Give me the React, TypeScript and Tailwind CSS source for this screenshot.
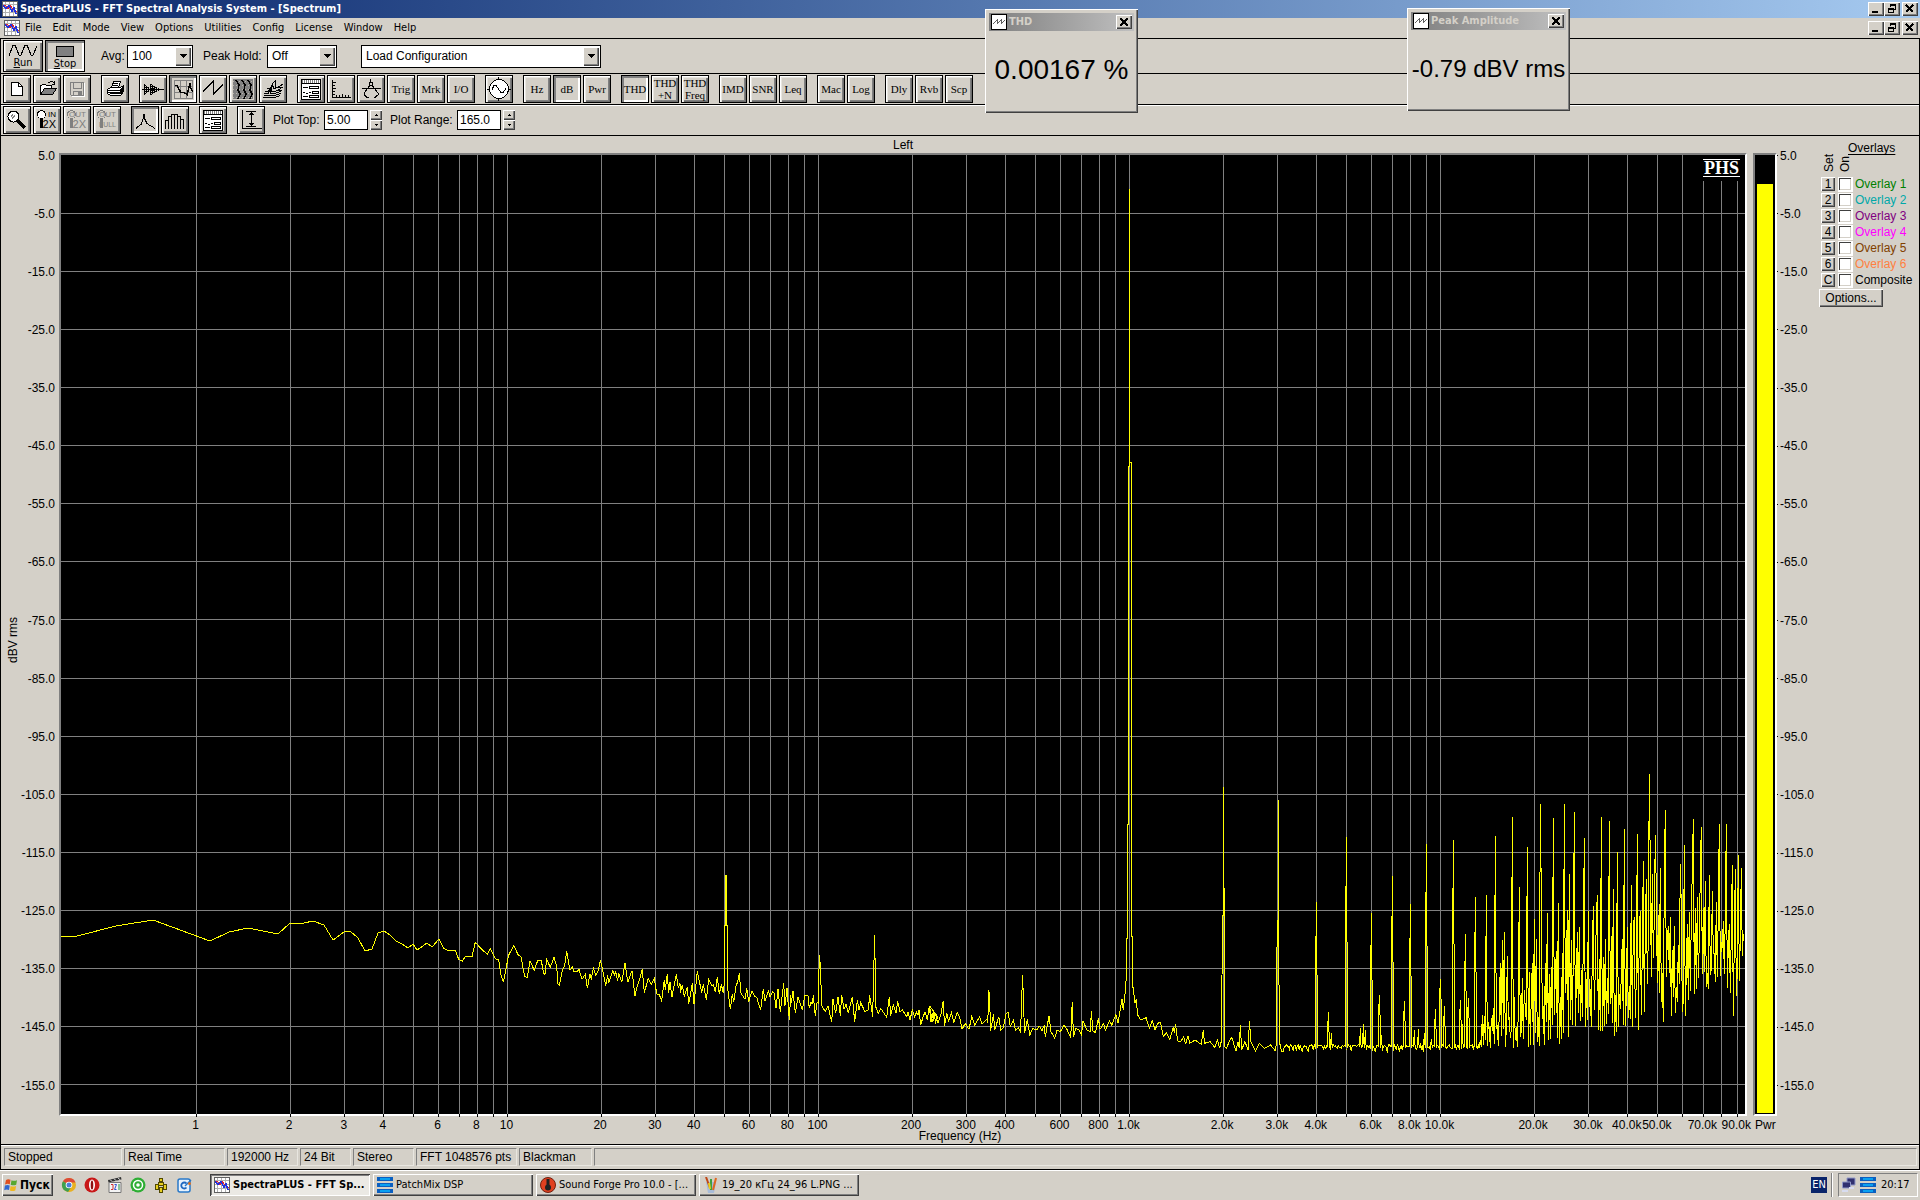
import { ReactNode } from "react";
import clsx from "clsx";

const FACE = "bg-[#d4d0c8]";
const RAISED = "shadow-[inset_1px_1px_0_#fff,inset_2px_2px_0_#e8e6e0,inset_-1px_-1px_0_#6e6e6e,inset_-2px_-2px_0_#808080]";
const SUNKEN = "shadow-[inset_2px_2px_0_#808080,inset_-2px_-2px_0_#fff]";
const THIN = "shadow-[inset_1px_1px_0_#fff,inset_-1px_-1px_0_#404040,inset_-2px_-2px_0_#808080]";
const ARIAL = "font-['Liberation_Sans',Arial,sans-serif] text-xs";
const TAHOMA = "font-['Tahoma','DejaVu_Sans_Condensed','Noto_Sans',sans-serif] text-[11px]";

/* ---------- spectrum geometry ---------- */

const LEFT = 61;
const TOP = 155;
const WIDTH = 1684;
const HEIGHT = 959;
const freqX = (f: number) => 196.5 + 311 * Math.log10(f);
const dbRows = Array.from({ length: 17 }, (_, i) => 5 - i * 10);
const dbY = (db: number) => TOP + 0.5 + (5 - db) * 5.806;

const gridFreqs: number[] = [];
for (let decade = 1; decade <= 10000; decade *= 10)
{
    for (let n = 1; n < 10; n++) gridFreqs.push(n * decade);
}

const freqLabels: [number, string][] = [
    [1, "1"], [2, "2"], [3, "3"], [4, "4"], [6, "6"], [8, "8"],
    [10, "10"], [20, "20"], [30, "30"], [40, "40"], [60, "60"], [80, "80"],
    [100, "100"], [200, "200"], [300, "300"], [400, "400"], [600, "600"], [800, "800"],
    [1000, "1.0k"], [2000, "2.0k"], [3000, "3.0k"], [4000, "4.0k"], [6000, "6.0k"], [8000, "8.0k"],
    [10000, "10.0k"], [20000, "20.0k"], [30000, "30.0k"], [40000, "40.0k"], [50000, "50.0k"],
    [70000, "70.0k"], [90000, "90.0k"],
];

/* ---------- trace ---------- */

// below 8 Hz
const low = "61,936 77,936 116,926 153,920 210,941 229,932 248,928 278,934 290,923 304,923 313,921 324,925 333,940 344,932 350,931 358,938 365,951 372,949 378,933 384,931 390,935 396,941 402,944 408,948 413,944 417,950 423,946 427,943 432,947 439,939";

// 6 Hz to 230 Hz, thirds of a pixel from 440,860
const mid = "0,243 12,266 22,271 46,271 56,298 67,304 76,290 96,290 106,247 125,268 142,283 151,265 166,296 176,300 183,345 190,367 206,285 221,257 235,285 243,290 254,350 262,352 270,304 283,330 293,302 304,302 311,340 315,343 320,298 331,322 342,292 350,320 354,372 358,376 366,335 374,315 380,274 386,310 390,330 397,322 401,334 412,334 417,328 426,358 436,343 442,385 450,343 454,355 460,325 467,346 475,332 481,301 487,325 497,377 503,345 506,370 518,332 524,345 527,335 533,362 536,340 545,367 555,310 563,367 576,332 585,408 592,377 600,355 607,328 613,398 625,355 634,373 643,355 650,402 658,404 665,422 673,360 676,390 682,343 686,398 690,367 696,410 709,343 715,385 720,370 721,398 727,376 733,410 742,380 746,433 757,370 762,433 772,334 785,398 790,373 799,419 806,358 812,370 817,378 820,375 826,395 832,352 838,402 844,373 850,400 853,370 854,195 857,195 857,45 859,45 859,195 862,195 863,385 871,448 877,402 881,425 889,373 892,370 898,340 903,400 915,418 920,385 926,425 936,392 944,410 950,412 956,433 962,448 970,388 975,424 985,392 990,410 998,394 1003,400 1008,445 1014,388 1021,455 1031,370 1035,437 1041,385 1048,479 1052,405 1054,430 1059,394 1066,458 1074,412 1087,450 1094,407 1104,407 1108,445 1112,428 1117,430 1120,406 1126,467 1131,428 1135,430 1138,286 1141,313 1145,437 1156,455 1164,437 1175,487 1179,418 1187,460 1194,410 1201,467 1205,406 1212,448 1218,433 1225,460 1237,410 1244,485 1252,421 1257,450 1262,428 1275,455 1285,450 1289,406 1298,470 1301,335 1304,226 1307,440 1315,460 1322,445 1340,472 1348,410 1352,467 1360,435 1368,460 1373,424 1380,455 1387,450 1400,470 1404,456 1410,480 1417,450 1424,470 1430,456 1434,466 1437,450 1442,494 1448,475 1455,455 1462,480 1468,437 1473,487 1480,455 1487,487 1493,470";

// 230 Hz to 3 kHz, x in 1/2.45 and y in 1/3 of a pixel from 640,860
const high = "709,437 717,487 722,455 730,490 737,465 743,422 746,498 752,460 756,485 763,457 769,487 777,458 783,470 789,508 797,490 806,508 813,468 820,495 832,470 838,492 850,478 852,490 854,390 856,400 859,512 866,463 869,510 879,470 884,510 890,503 897,460 902,457 907,500 915,480 920,512 927,503 932,515 935,440 937,345 939,403 942,520 949,478 955,525 962,505 972,510 978,498 985,512 990,497 993,530 1002,468 1007,515 1016,535 1022,510 1030,515 1039,496 1047,510 1054,530 1056,515 1059,427 1062,530 1068,505 1076,510 1082,525 1085,482 1095,510 1103,515 1106,453 1109,512 1116,518 1123,475 1127,508 1136,490 1140,512 1150,482 1156,495 1166,463 1171,490 1175,460 1181,418 1184,450 1188,405 1191,360 1191,235 1194,235 1195,-108 1197,-108 1197,-1182 1199,-1182 1199,-2013 1200,-2013 1200,-1194 1203,-1194 1203,-129 1205,-129 1205,228 1207,228 1207,375 1213,430 1216,418 1219,465 1227,480 1240,473 1248,505 1255,482 1262,510 1268,490 1275,487 1282,530 1290,518 1298,538 1307,500 1309,520 1312,493 1317,543 1325,545 1332,530 1337,553 1342,527 1347,550 1360,540 1375,553 1380,511 1383,550 1397,545 1408,562 1415,540 1420,565 1425,540 1427,165 1429,165 1429,-219 1430,-219 1431,170 1432,560 1437,565 1445,540 1450,532 1460,573 1465,545 1468,565 1471,495 1474,570 1482,545 1490,570 1493,484 1497,545 1508,572 1517,550 1530,565 1545,555 1556,572 1560,550 1561,190 1563,180 1563,-180 1564,-180 1565,185 1566,550";

// harmonics above 3 kHz, thirds of a pixel from 1280,740
const peaks: [number, number][] = [
    [109, 486], [145, 815], [154, 880], [199, 291], [240, 865], [250, 852], [256, 870], [274, 518],
    [298, 765], [304, 885], [337, 408], [373, 783], [391, 492], [403, 870], [415, 868], [433, 880],
    [439, 312], [454, 898], [466, 807], [481, 717], [493, 798], [520, 300], [541, 780], [547, 852],
    [556, 582], [565, 774], [586, 471], [607, 825], [618, 465], [628, 867], [646, 288], [661, 670],
    [667, 600], [673, 576], [682, 648], [697, 231], [709, 860], [718, 441], [727, 715], [742, 321],
    [757, 670], [763, 537], [769, 597], [781, 192], [784, 462], [796, 670], [802, 519], [808, 702],
    [820, 234], [829, 632], [835, 489], [841, 770], [853, 192], [862, 510], [868, 402], [874, 600],
    [883, 216], [892, 576], [898, 561], [913, 294], [925, 513], [940, 498], [949, 543], [952, 465],
    [964, 231], [976, 597], [988, 243], [1000, 447], [1012, 336], [1027, 597], [1033, 267], [1042, 560],
    [1054, 435], [1063, 530], [1072, 282], [1081, 513], [1090, 363], [1099, 417], [1108, 102], [1111, 381],
    [1117, 402], [1126, 285], [1129, 447], [1141, 384], [1153, 411], [1156, 210], [1165, 558], [1171, 531],
    [1183, 558], [1195, 615], [1201, 372], [1204, 498], [1213, 315], [1222, 552], [1228, 516], [1237, 390],
    [1240, 237], [1246, 504], [1252, 471], [1261, 399], [1264, 261], [1276, 423], [1288, 405], [1297, 453],
    [1309, 486], [1318, 252], [1330, 543], [1339, 252], [1348, 552], [1357, 375], [1366, 387], [1375, 345],
    [1384, 384], [1390, 583],
];

const noiseTop: [number, number][] = [[600, 840], [650, 760], [750, 680], [850, 620], [1000, 580], [1100, 500], [1390, 500]];
const noiseBottom: [number, number][] = [
    [600, 925], [740, 922], [850, 912], [885, 870], [940, 880], [1000, 890], [1080, 870], [1100, 790], [1120, 690],
    [1150, 850], [1190, 840], [1217, 860], [1250, 760], [1270, 790], [1300, 760], [1325, 700], [1360, 830], [1390, 700],
];

function lerp(table: [number, number][], x: number)
{
    const i = Math.max(1, table.findIndex(([px]) => px >= x));
    const [x0, y0] = table[i - 1];
    const [x1, y1] = table[i];
    return y0 + ((y1 - y0) * (x - x0)) / (x1 - x0);
}

function place(points: string, x: number, y: number, sx: number, sy: number)
{
    return points.split(" ").map((p) => {
        const [px, py] = p.split(",").map(Number);
        return `${(x + px / sx).toFixed(1)},${(y + py / sy).toFixed(1)}`;
    }).join(" ");
}

function harmonics()
{
    let seed = 41;
    const rnd = () => (seed = (seed * 16807) % 2147483647) / 2147483647;
    const out: string[] = [];
    let down = false;
    for (let x = 1; x <= 1390; x += 3)
    {
        const peak = peaks.find(([px]) => Math.abs(px - x) <= 1);
        if (x < 600)
        {
            if (peak)
            {
                const half = peak[1] < 600 ? peak[1] + (922 - peak[1]) * 0.5 : peak[1] + 60;
                out.push(`${x - 2},920`, `${x - 2},${Math.min(915, half)}`, `${x},${peak[1]}`, `${x + 2},${Math.min(915, half)}`, `${x + 2},925`);
            }
            else
            {
                out.push(`${x},${914 + Math.round(rnd() * rnd() * 26)}`);
            }
            continue;
        }
        const bottom = lerp(noiseBottom, x);
        const top = lerp(noiseTop, x);
        if (peak)
        {
            out.push(`${x},${peak[1]}`);
            down = true;
        }
        else
        {
            // samples swing between the floor and the hash above it
            const y = down ? bottom - rnd() * rnd() * 0.6 * (bottom - top) : top + rnd() * 0.8 * (bottom - top);
            out.push(`${x},${y}`);
            down = !down;
        }
    }
    return out.join(" ");
}

const trace = [low, place(mid, 440, 860, 3, 3), place(high, 640, 860, 2.45, 3), place(harmonics(), 1280, 740, 3, 3)].join(" ");

/* ---------- icons ---------- */

function Glyph({ children }: { children: ReactNode })
{
    return (
        <svg viewBox="0 0 28 28" className="absolute -inset-px size-7" fill="none" stroke="#000" shapeRendering="crispEdges" aria-hidden="true">
            {children}
        </svg>
    );
}

const icons: Record<string, ReactNode> = {
    new: <Glyph><path d="M8.500 7.500h7l4 4v9h-11z" fill="#fff" /><path d="M15.500 7.500v4h4" /></Glyph>,
    open: (
        <Glyph>
            <path d="M7.500 19.500v-9h1l1-1h3l1 1h5v3" fill="#fff" />
            <path d="M7.500 19.500l4-6h12l-4 6z" fill="#808080" />
            <path d="M15 7.500h2M17 6.500h3M20 7.500h1M21.500 6v4M19 9.500h3" />
        </Glyph>
    ),
    save: (
        <Glyph>
            <path d="M7.500 7.500h13v13h-12l-1-1z" stroke="#808080" />
            <path d="M10.500 7.500v6h8v-6M10.500 20.500v-4h8v4" stroke="#808080" />
            <path d="M15 17h3v3h-3z" fill="#808080" stroke="none" />
            <path d="M21.500 8v13.500h-13" stroke="#fff" />
        </Glyph>
    ),
    print: (
        <Glyph>
            <path d="M10.500 12.500l2-6h7l-2 6z" fill="#fff" />
            <path d="M6.500 14.500l3-2h10l3-2v6l-3 4h-10l-3-2z" fill="#fff" />
            <path d="M12 8.500h5M12 10.500h5M7 15.500h12l3-3M7 17.500h12l3-3M9 18.500h10l3-3" />
        </Glyph>
    ),
    wave: (
        <Glyph>
            <path d="M3 14.500h22M5.500 9v11M7.500 11v7M9.500 12v5M11.500 9v11M13.500 10v9M15.500 11v7M17.500 12v5M19.500 13v3" />
            <path d="M6.500 10v9M12.500 9v11M14.500 11v7M8.500 12v5M16.500 12v5" strokeDasharray="1 1" />
        </Glyph>
    ),
    spectrum: (
        <Glyph>
            <path d="M5.500 5.500h18v18h-18zM11.500 5v19M17.500 5v19M5 11.500h19M5 17.500h19" stroke="#808080" />
            <path d="M6 10.500h2l2 4 2 3h3l3 2 1-4 1-3 1-4v4l3 4" strokeWidth="1.500" />
        </Glyph>
    ),
    zigzag: <Glyph><path d="M4 16.500l10-10v13l10-10" /></Glyph>,
    spectrogram: (
        <Glyph>
            <path d="M4 4h20v20h-20z" fill="#808080" stroke="none" />
            <path d="M4 6.500h20M4 10.500h20M4 14.500h20M4 18.500h20M4 22.500h20" stroke="#b8b4ac" strokeDasharray="1 2" />
            <path d="M7 5l3 5-1 5 2 4-2 5M13 5l3 5-1 5 2 4-2 5M19 5l3 5-1 5 2 4-2 5" strokeWidth="1.500" />
        </Glyph>
    ),
    surface: (
        <Glyph>
            <path d="M4 22.500h12l5-2M5 20.500h10l7-2M5 18.500h4l2-3v3h4l7-2M6 16.500h3l3-4v4h4l6-3M8 13.500h3l2-3M16 13v-7l-3 3 2 5 6-3 3-2M18 12.500h6M19 15.500h4" />
        </Glyph>
    ),
    properties: (
        <Glyph>
            <path d="M4.500 4.500h19v20h-19z" fill="#fff" />
            <path d="M5 6.500h18" stroke="#808080" strokeWidth="3" strokeDasharray="1 1" />
            <path d="M4 8.500h20M12.500 11.500h9v2h-9zM15.500 16.500h6v2h-6zM12.500 20.500h9v2h-9zM6 12.500h5M6 17.500h2M9 18.500h2M12 17.500h2M6 21.500h5" />
        </Glyph>
    ),
    scale: <Glyph><path d="M5.500 5v17.500h18M5 7.500h4M5 10.500h3M5 13.500h4M5 16.500h3M5 19.500h3M9.500 20v3M12.500 20v3M15.500 19v4M18.500 20v3M21.500 20v3" /></Glyph>,
    compass: <Glyph><path d="M13.500 4v3M12.500 7h3v3h-3zM5 13.500h19M13 10l-2 3-4 5v2l4 3M15 10l2 3 4 5v2l-4 3M10 22h2M17 22h2" /></Glyph>,
    generator: (
        <Glyph>
            <circle cx="14" cy="14" r="9.500" fill="#fff" />
            <path d="M13.500 2v3M13.500 23v3M2 14.500h3M23 14.500h3M7 14.500l2-4h2l5 7h2l3-4" />
        </Glyph>
    ),
    zoom: (
        <Glyph>
            <circle cx="10.500" cy="10.500" r="5.500" fill="#fff" />
            <path d="M8 10.500l2-2M9 12.500l3-3" stroke="#808080" />
            <path d="M15 15l7 7" strokeWidth="3" />
        </Glyph>
    ),
    peak: <Glyph><path d="M5 22.500l2-2 3-2 2-5 1-5 1 5 2 4 3 2 2 1 3 2" /></Glyph>,
    bars: <Glyph><path d="M4.500 23v-9h3v9M7.500 14v-4h3v13M10.500 10v-2h3v15M13.500 8h3v15M16.500 10h3v13M19.500 13h3v10" /></Glyph>,
    range: <Glyph><path d="M5.500 4v18.500h19M9 5.500h10M9 20.500h10M14.500 6v14M12 8.500h5M13 7.500h3M12 17.500h5M13 18.500h3" /></Glyph>,
};

function ZoomIcon({ top, bottom, off, small }: { top: string; bottom: string; off?: boolean; small?: boolean })
{
    return (
        <>
            <Glyph>
                <circle cx="8.500" cy="8.500" r="4" fill={off ? "none" : "#fff"} stroke={off ? "#808080" : "#000"} />
                <path d="M8.500 13v9" stroke={off ? "#808080" : "#000"} strokeWidth="3" />
            </Glyph>
            <span className={clsx("absolute right-1 top-1 font-['Liberation_Sans'] text-[8px] leading-2", off && "text-[#808080]")}>{top}</span>
            <span className={clsx("absolute bottom-1 right-1 font-['Liberation_Sans']", small ? "text-[7px] leading-2" : "text-[11px] leading-[9px]", off && "text-[#808080]")}>{bottom}</span>
        </>
    );
}

function AppIcon({ className }: { className?: string })
{
    return (
        <svg viewBox="0 0 16 16" className={clsx("size-4 shrink-0", className)} fill="none" shapeRendering="crispEdges" aria-hidden="true">
            <path d="M0 0h16v16h-16z" fill="#fff" />
            <path d="M3.500 0v16M7.500 0v16M11.500 0v16M0 3.500h16M0 7.500h16M0 11.500h16" stroke="#b0b0b0" />
            <path d="M.500.500h15v15h-15z" stroke="#606060" />
            <path d="M1 4l3 1 2 3 2-4 3 4 4 3" stroke="#e02030" />
            <path d="M1 5l3 2 3-2 3 5 2-3 2 6" stroke="#2030e0" strokeWidth="1.500" />
        </svg>
    );
}

/* ---------- controls ---------- */

function ToolButton({ label, icon, children, on, className }: { label: string; icon?: string; children?: ReactNode; on?: boolean; className?: string })
{
    return (
        <button type="button" aria-label={label} aria-pressed={on}
            className={clsx("relative flex size-7 shrink-0 items-center justify-center whitespace-nowrap border border-black font-['Liberation_Serif','Times_New_Roman',serif] text-[11px] leading-3", FACE, on ? SUNKEN : RAISED, className)}>
            {icon ? icons[icon] : children}
        </button>
    );
}

function Group({ children }: { children: ReactNode })
{
    return <div className="flex gap-[2px]">{children}</div>;
}

function Combo({ id, value, className }: { id: string; value: string; className: string })
{
    return (
        <div className={clsx("relative h-[23px]", className)}>
            <select id={id} aria-label={id} className={clsx("h-full w-full appearance-none border border-black bg-white pl-1", ARIAL)} defaultValue={value}>
                <option>{value}</option>
            </select>
            <span className={clsx("pointer-events-none absolute right-[2px] top-[2px] flex h-[19px] w-4 items-center justify-center", FACE, THIN)}>
                <svg viewBox="0 0 7 4" className="h-1 w-[7px]" shapeRendering="crispEdges"><path d="M0 0h7l-3.500 4z" /></svg>
            </span>
        </div>
    );
}

function Spinner({ name }: { name: string })
{
    return (
        <div className="ml-[2px] flex w-3 flex-col">
            <button type="button" aria-label={`${name} up`} className={clsx("flex h-[10px] items-center justify-center", FACE, THIN)}>
                <svg viewBox="0 0 3 2" className="h-[2px] w-[3px]" shapeRendering="crispEdges"><path d="M0 2h3l-1.500-2z" /></svg>
            </button>
            <button type="button" aria-label={`${name} down`} className={clsx("flex h-[10px] items-center justify-center", FACE, THIN)}>
                <svg viewBox="0 0 3 2" className="h-[2px] w-[3px]" shapeRendering="crispEdges"><path d="M0 0h3l-1.500 2z" /></svg>
            </button>
        </div>
    );
}

function CaptionButton({ kind }: { kind: "min" | "restore" | "close" })
{
    return (
        <button type="button" aria-label={kind} className={clsx("flex h-[14px] w-4 items-center justify-center", FACE, THIN, kind === "close" && "ml-[2px]")}>
            <svg viewBox="0 0 10 10" className="size-[10px]" fill="none" stroke="#000" shapeRendering="crispEdges">
                {kind === "min" && <path d="M1 8h6" strokeWidth="2" />}
                {kind === "restore" && <path d="M3.500 3v-2.500h5v5h-2M3 1.500h6M1.500 4.500h5v4h-5zM1 5.500h6" />}
                {kind === "close" && <path d="M1 1l7 7M8 1l-7 7" strokeWidth="1.500" />}
            </svg>
        </button>
    );
}

function CaptionButtons()
{
    return (
        <div className="ml-auto flex pr-[2px]">
            <CaptionButton kind="min" />
            <CaptionButton kind="restore" />
            <CaptionButton kind="close" />
        </div>
    );
}

function Readout({ title, value, className, size }: { title: string; value: string; className: string; size: string })
{
    return (
        <section className={clsx("absolute flex flex-col p-1", FACE, THIN, className)}>
            <header className={clsx("flex h-[18px] items-center bg-linear-to-r from-[#808080] to-[#c0c0c0] pl-[2px] pr-[2px] font-bold text-[#d4d0c8]", TAHOMA)}>
                <svg viewBox="0 0 16 16" className="size-4" fill="none" shapeRendering="crispEdges">
                    <path d="M.500.500h15v15h-15z" fill="#fff" stroke="#000" />
                    <path d="M2 10l4-4v4l4-4v4l4-4" stroke="#606060" />
                </svg>
                <h2 className="ml-[2px] whitespace-nowrap">{title}</h2>
                <button type="button" aria-label={`Close ${title}`} className={clsx("ml-auto flex h-[14px] w-4 items-center justify-center", FACE, THIN)}>
                    <svg viewBox="0 0 8 8" className="size-2" stroke="#000" strokeWidth="1.500" shapeRendering="crispEdges"><path d="M0 0l8 8M8 0l-8 8" /></svg>
                </button>
            </header>
            <p className={clsx("flex flex-1 items-center justify-center whitespace-nowrap font-['Liberation_Sans',Arial,sans-serif] leading-10", size)}>{value}</p>
        </section>
    );
}

/* ---------- page parts ---------- */

function Toolbars()
{
    return (
        <>
            <div className={clsx("flex h-[35px] items-center border-t border-black pl-[2px]", ARIAL)}>
                <button type="button" className={clsx("flex h-8 w-10 flex-col items-center justify-end border border-black pb-[2px] leading-3", RAISED, TAHOMA)}>
                    <svg viewBox="0 0 30 14" className="h-[14px] w-[30px]" fill="none" stroke="#000" shapeRendering="crispEdges">
                        <path d="M1 13l4-11h2l4 10h2l4-10h2l4 10h2l4-9" />
                    </svg>
                    <span className="leading-3"><u>R</u>un</span>
                </button>
                <button type="button" aria-pressed="true" className={clsx("ml-[2px] flex h-8 w-10 flex-col items-center justify-end border border-black pb-px", SUNKEN, TAHOMA)}>
                    <span className="mb-px h-[11px] w-[18px] border border-black bg-[#808080]" />
                    <span className="leading-3"><u>S</u>top</span>
                </button>
                <label htmlFor="Average" className="ml-4 w-[26px]">Avg:</label>
                <Combo id="Average" value="100" className="w-[66px]" />
                <label htmlFor="Peak hold" className="ml-[10px] w-16 whitespace-nowrap">Peak Hold:</label>
                <Combo id="Peak hold" value="Off" className="w-[70px]" />
                <Combo id="Configuration" value="Load Configuration" className="ml-6 w-60" />
            </div>
            <div className="flex h-[31px] gap-[10px] border-t border-black pl-[2px] pt-px">
                <Group>
                    <ToolButton label="New" icon="new" />
                    <ToolButton label="Open" icon="open" />
                    <ToolButton label="Save" icon="save" />
                </Group>
                <ToolButton label="Print" icon="print" />
                <Group>
                    <ToolButton label="Time series" icon="wave" />
                    <ToolButton label="Spectrum" icon="spectrum" on />
                    <ToolButton label="Phase" icon="zigzag" />
                    <ToolButton label="Spectrogram" icon="spectrogram" />
                    <ToolButton label="Surface" icon="surface" />
                </Group>
                <Group>
                    <ToolButton label="Processing settings" icon="properties" />
                    <ToolButton label="Scaling" icon="scale" />
                    <ToolButton label="Calibration" icon="compass" />
                    <ToolButton label="Trigger" className="text-xs">Trig</ToolButton>
                    <ToolButton label="Markers" className="text-xs">Mrk</ToolButton>
                    <ToolButton label="Input output" className="text-xs">I/O</ToolButton>
                </Group>
                <ToolButton label="Signal generator" icon="generator" />
                <Group>
                    <ToolButton label="Peak frequency" className="text-xs">Hz</ToolButton>
                    <ToolButton label="Peak amplitude" className="text-xs" on>dB</ToolButton>
                    <ToolButton label="Total power" className="text-xs">Pwr</ToolButton>
                </Group>
                <Group>
                    <ToolButton label="THD" on>THD</ToolButton>
                    <ToolButton label="THD plus noise"><span>THD<br />+N</span></ToolButton>
                    <ToolButton label="THD against frequency"><span>THD<br />Freq</span></ToolButton>
                </Group>
                <Group>
                    <ToolButton label="IMD">IMD</ToolButton>
                    <ToolButton label="SNR">SNR</ToolButton>
                    <ToolButton label="Leq" className="text-xs">Leq</ToolButton>
                </Group>
                <Group>
                    <ToolButton label="Macro" className="text-xs">Mac</ToolButton>
                    <ToolButton label="Logging" className="text-xs">Log</ToolButton>
                </Group>
                <Group>
                    <ToolButton label="Delay" className="text-xs">Dly</ToolButton>
                    <ToolButton label="Reverb" className="text-xs">Rvb</ToolButton>
                    <ToolButton label="Scope" className="text-xs">Scp</ToolButton>
                </Group>
            </div>
            <div className="h-px bg-black" />
            <div className={clsx("flex h-[30px] items-start border-t border-white pl-[2px]", ARIAL)}>
                <div className="flex gap-[10px]">
                    <Group>
                        <ToolButton label="Zoom" icon="zoom" />
                        <ToolButton label="Zoom in"><ZoomIcon top="IN" bottom="2X" /></ToolButton>
                        <ToolButton label="Zoom out"><ZoomIcon top="OUT" bottom="2X" off /></ToolButton>
                        <ToolButton label="Zoom out full"><ZoomIcon top="OUT" bottom="FULL" off small /></ToolButton>
                    </Group>
                    <Group>
                        <ToolButton label="Line plot" icon="peak" on />
                        <ToolButton label="Bar plot" icon="bars" />
                    </Group>
                    <ToolButton label="Plot options" icon="properties" />
                    <ToolButton label="Plot range" icon="range" />
                </div>
                <div className="flex h-7 items-center">
                    <label htmlFor="top" className="ml-2 w-[51px] whitespace-nowrap">Plot Top:</label>
                    <input id="top" defaultValue="5.00" className="h-5 w-11 border border-black bg-white px-[2px]" />
                    <Spinner name="Plot top" />
                    <label htmlFor="range" className="ml-2 w-[67px] whitespace-nowrap">Plot Range:</label>
                    <input id="range" defaultValue="165.0" className="h-5 w-11 border border-black bg-white px-[2px]" />
                    <Spinner name="Plot range" />
                </div>
            </div>
        </>
    );
}

function DbScale({ ticks, className }: { ticks?: boolean; className: string })
{
    return (
        <div className={clsx("flex flex-col pb-[2px] pt-[2px]", className)}>
            {dbRows.map((db, i) => (
                <div key={db} className={clsx("basis-0", i === 16 ? "grow" : "grow-2")}>
                    <div className="flex h-px items-center justify-end">
                        {ticks && <i className="h-px w-[3px] bg-black" />}
                        <span className={clsx(ticks && "ml-[2px] flex-1")}>{db.toFixed(1)}</span>
                    </div>
                </div>
            ))}
        </div>
    );
}

function Plot()
{
    return (
        <div className="relative min-w-0 flex-1 border-2 border-b-white border-l-[#808080] border-r-white border-t-[#808080] bg-black">
            <svg viewBox={`${LEFT} ${TOP} ${WIDTH} ${HEIGHT}`} preserveAspectRatio="none" className="absolute inset-0 h-full w-full" fill="none" shapeRendering="crispEdges">
                <g stroke="#808080">
                    {gridFreqs.map((f) => <path key={f} d={`M${Math.floor(freqX(f)) + 0.5} ${TOP}v${HEIGHT}`} vectorEffect="non-scaling-stroke" />)}
                    {dbRows.slice(1).map((db) => <path key={db} d={`M${LEFT} ${Math.floor(dbY(db)) + 0.5}h${WIDTH}`} vectorEffect="non-scaling-stroke" />)}
                </g>
                <polyline points={trace} stroke="#ff0" vectorEffect="non-scaling-stroke" />
            </svg>
            <div className="absolute right-0 top-0 bg-black px-[5px] py-1">
                <div className="border-y border-white px-px font-['Liberation_Serif',serif] text-lg font-bold leading-4 text-white">PHS</div>
            </div>
            {gridFreqs.map((f) => (
                <i key={f} className="absolute top-full h-[3px] w-px bg-black" style={{ left: `${((Math.floor(freqX(f)) - LEFT) / WIDTH) * 100}%` }} />
            ))}
            {freqLabels.map(([f, text]) => (
                <span key={f} className="absolute top-full mt-[3px] -translate-x-1/2 leading-4" style={{ left: `${((freqX(f) - 1 - LEFT) / WIDTH) * 100}%` }}>{text}</span>
            ))}
        </div>
    );
}

const overlays = [
    { key: "1", name: "Overlay 1", color: "text-[#008000]" },
    { key: "2", name: "Overlay 2", color: "text-[#00a8a8]" },
    { key: "3", name: "Overlay 3", color: "text-[#800080]" },
    { key: "4", name: "Overlay 4", color: "text-[#ff00ff]" },
    { key: "5", name: "Overlay 5", color: "text-[#804000]" },
    { key: "6", name: "Overlay 6", color: "text-[#ff8040]" },
    { key: "C", name: "Composite", color: "text-black" },
];

function Overlays()
{
    return (
        <aside className="w-[101px] shrink-0 pt-1">
            <h2 className="pl-[30px] leading-4 underline underline-offset-2">Overlays</h2>
            <div className="flex h-4 items-end gap-[2px] pl-1">
                <span className="rotate-180 leading-[14px] [writing-mode:vertical-rl]">Set</span>
                <span className="rotate-180 leading-[14px] [writing-mode:vertical-rl]">On</span>
            </div>
            <div className="pl-[3px] pt-1">
                {overlays.map((o) => (
                    <div key={o.key} className="flex h-4 items-center">
                        <button type="button" aria-label={`Set ${o.name}`} className={clsx("flex h-[14px] w-[14px] items-center justify-center leading-3", FACE, THIN)}>{o.key}</button>
                        <input id={`overlay-${o.key}`} type="checkbox" className="ml-[3px] h-[15px] w-[15px] appearance-none border border-b-2 border-r-2 border-white bg-white shadow-[inset_1px_1px_0_#404040,inset_-1px_-1px_0_#d4d0c8]" />
                        <label htmlFor={`overlay-${o.key}`} className={clsx("ml-[2px] whitespace-nowrap", o.color)}>{o.name}</label>
                    </div>
                ))}
            </div>
            <button type="button" className={clsx("ml-px mt-px flex h-[18px] w-16 items-center justify-center", FACE, THIN)}>Options...</button>
        </aside>
    );
}

function Cell({ className, children }: { className: string; children?: ReactNode })
{
    return (
        <div className={clsx("flex h-[18px] items-center whitespace-nowrap border border-b-[#e8e6e0] border-l-[#808080] border-r-[#e8e6e0] border-t-[#808080] pl-[3px]", className)}>{children}</div>
    );
}

function TaskButton({ icon, children, active }: { icon: ReactNode; children: ReactNode; active?: boolean })
{
    return (
        <button type="button" className={clsx("flex h-[22px] w-40 items-center gap-[3px] whitespace-nowrap pl-1", active ? "bg-[#ebe9e4] font-bold shadow-[inset_1px_1px_0_#404040,inset_-1px_-1px_0_#fff,inset_2px_2px_0_#808080]" : clsx(FACE, THIN))}>
            {icon}
            <span>{children}</span>
        </button>
    );
}

const mixerIcon = (
    <svg viewBox="0 0 16 16" className="size-4 shrink-0" shapeRendering="crispEdges">
        <path d="M0 0h16v4h-16zM0 6h16v4h-16zM0 12h16v4h-16z" fill="#0a5fc0" />
        <path d="M3 1h10v2h-10zM3 7h10v2h-10zM3 13h10v2h-10z" fill="#0aa0f0" />
    </svg>
);

function QuickLaunch()
{
    return (
        <div className="ml-2 flex gap-[7px]">
            <svg viewBox="0 0 16 16" className="size-4">
                <circle cx="8" cy="8" r="7" fill="#e8b020" />
                <path d="M8 8L2 4.200a7 7 0 0 1 12.500 1.300H8z" fill="#dc4a38" />
                <path d="M8 8L2 4.200a7 7 0 0 0 5 10.700l3-4.500z" fill="#3fa050" />
                <circle cx="8" cy="8" r="3.300" fill="#fff" /><circle cx="8" cy="8" r="2.500" fill="#4a80d8" />
            </svg>
            <svg viewBox="0 0 16 16" className="size-4"><circle cx="8" cy="8" r="7.500" fill="#c81818" /><ellipse cx="8" cy="8" rx="3" ry="5.500" fill="#fff" /><ellipse cx="8" cy="8" rx="1.300" ry="4.500" fill="#901010" /></svg>
            <svg viewBox="0 0 16 16" className="size-4">
                <path d="M1 3l13-3 .500 2.500-13 3z" fill="#333" /><path d="M3 2.500l2 2M7 1.600l2 2M11 .800l2 2" stroke="#eee" />
                <path d="M2 5.500h12v10h-12z" fill="#f4f4f4" stroke="#777" />
                <path d="M4 7.500h2v5h-2" stroke="#d03030" fill="none" /><path d="M7.500 7.500h2l-2 5h2" stroke="#3050d0" fill="none" /><path d="M12 7v6" stroke="#209040" />
            </svg>
            <svg viewBox="0 0 16 16" className="size-4"><circle cx="8" cy="8" r="7.500" fill="#2eae34" /><path d="M2 14l1-4 3 3z" fill="#2eae34" /><circle cx="8" cy="8" r="4.500" fill="none" stroke="#fff" strokeWidth="1.500" /><circle cx="8" cy="8" r="1.800" fill="#fff" /></svg>
            <svg viewBox="0 0 16 16" className="size-4" shapeRendering="crispEdges"><path d="M6.500 1.500h3v3h-3zM5.500 5.500h5v3h-5zM2.500 7.500h3v5h-3zM10.500 7.500h3v5h-3zM6.500 10.500h3v5h-3z" fill="#e8d020" stroke="#504800" /></svg>
            <svg viewBox="0 0 16 16" className="size-4"><rect x="2" y="2" width="12" height="13" rx="2" fill="#e8f2fc" stroke="#2878c8" strokeWidth="1.500" /><path d="M10.500 6.500a3 3 0 1 0 0 4" fill="none" stroke="#2068c0" strokeWidth="1.800" /><path d="M9 9l6-6" stroke="#2878c8" strokeWidth="1.500" /><circle cx="13.500" cy="6.500" r="1.500" fill="#e07020" /></svg>
        </div>
    );
}

function Taskbar()
{
    return (
        <footer className={clsx("flex h-[30px] items-center border-t border-white pb-px pl-[2px]", TAHOMA)}>
            <button type="button" className={clsx("flex h-[22px] w-[51px] items-center gap-[2px] pl-[2px] text-xs font-bold", FACE, THIN)}>
                <svg viewBox="0 0 14 14" className="size-[14px]">
                    <path d="M2 2q2-1.500 4.500-.300L5.800 6.200Q3.500 5.200 1 6.500z" fill="#e05020" />
                    <path d="M7.500 2.200q2.500 1 5.500 0l-.800 4.500q-3 1-5.500 0z" fill="#58a830" />
                    <path d="M.900 7.600q2.500-1.200 4.800-.200L5 12Q2.500 11 .200 12.200z" fill="#3068d0" />
                    <path d="M6.600 7.900q2.500 1 5.500 0l-.800 4.500q-3 1-5.400 0z" fill="#f0b820" />
                </svg>
                <span>Пуск</span>
            </button>
            <QuickLaunch />
            <div className="ml-[18px] flex gap-[3px]">
                <TaskButton active icon={<AppIcon />}>SpectraPLUS - FFT Sp...</TaskButton>
                <TaskButton icon={mixerIcon}>PatchMix DSP</TaskButton>
                <TaskButton icon={<svg viewBox="0 0 16 16" className="size-4 shrink-0"><circle cx="8" cy="8" r="7.500" fill="#e04020" stroke="#702010" /><path d="M6.500 2h3v7h-3z" fill="#222" /><circle cx="8" cy="10.500" r="3" fill="#222" /></svg>}>Sound Forge Pro 10.0 - [...</TaskButton>
                <TaskButton icon={<svg viewBox="0 0 16 16" className="size-4 shrink-0"><path d="M3 5h10l-2 11h-6z" fill="#a8bcd8" /><path d="M3 0l4 11" stroke="#c04818" strokeWidth="2" /><path d="M8 2v11" stroke="#40a040" strokeWidth="2" /><path d="M13 1l-3 12" stroke="#e06820" strokeWidth="2" /><path d="M6 6l1 6" stroke="#e8d020" strokeWidth="2" /></svg>}>19_20 кГц 24_96 L.PNG ...</TaskButton>
            </div>
            <span className="ml-auto flex size-4 items-center justify-center bg-[#0a246a] text-white">EN</span>
            <span className="ml-1 h-6 w-[2px] border-l border-[#808080] bg-white" />
            <div className="ml-[5px] mr-[2px] flex h-6 w-20 items-center gap-[3px] whitespace-nowrap border border-b-white border-l-[#808080] border-r-white border-t-[#808080] pl-[2px]">
                <svg viewBox="0 0 16 16" className="size-4">
                    <path d="M6 1h8v7h-8z" fill="#303070" stroke="#9098c8" /><path d="M1.500 5h8v6h-8z" fill="#303070" stroke="#9098c8" />
                    <path d="M1 13h6v2h-6zM8 10h5v2h-5z" fill="#d8dcf0" />
                </svg>
                {mixerIcon}
                <time className="ml-[2px]">20:17</time>
            </div>
        </footer>
    );
}

const menus = ["File", "Edit", "Mode", "View", "Options", "Utilities", "Config", "License", "Window", "Help"];

function App()
{
    return (
        <div className={clsx("relative flex min-h-screen flex-col overflow-hidden text-black", FACE)}>
            <header className={clsx("flex h-[18px] items-center bg-linear-to-r from-[#0a246a] to-[#a6caf0] pl-[2px] font-bold text-white", TAHOMA)}>
                <AppIcon />
                <h1 className="ml-[2px] whitespace-nowrap">SpectraPLUS - FFT Spectral Analysis System - [Spectrum]</h1>
                <CaptionButtons />
            </header>
            <nav className={clsx("flex h-5 items-center pl-1", TAHOMA)}>
                <AppIcon className="mr-[5px]" />
                <div className="flex gap-[11px]">
                    {menus.map((m) => <button key={m} type="button">{m}</button>)}
                </div>
                <CaptionButtons />
            </nav>

            <div className="flex flex-1 flex-col border-x border-b border-black">
                <Toolbars />
                <main className={clsx("flex flex-1 border-t border-black", ARIAL)}>
                    <div className="flex min-w-0 flex-1 flex-col">
                        <h2 className="flex h-[17px] items-center justify-center pl-[58px]">Left</h2>
                        <div className="flex flex-1">
                            <div className="flex w-5 items-center justify-end pt-3">
                                <span className="rotate-180 whitespace-nowrap leading-4 [writing-mode:vertical-rl]">dBV rms</span>
                            </div>
                            <DbScale className="w-[38px] pr-1 text-right" />
                            <Plot />
                        </div>
                        <p className="flex h-7 items-end justify-center pl-43 leading-4">Frequency (Hz)</p>
                    </div>
                    <div className="mb-7 ml-[6px] mt-[17px] flex">
                        <div className="relative flex w-6 flex-col border-2 border-b-white border-l-[#808080] border-r-white border-t-[#808080] bg-black px-[2px] pb-px pt-[29px]">
                            <div className="flex-1 bg-[#ff0]" />
                            <span className="absolute left-0 top-full mt-[3px] leading-4">Pwr</span>
                        </div>
                        <DbScale ticks className="-ml-[2px] w-[43px]" />
                    </div>
                    <Overlays />
                </main>
                <div className={clsx("flex h-[25px] items-center gap-[2px] border-t border-black pl-[3px] pr-[2px] shadow-[inset_0_1px_0_#fff]", ARIAL)}>
                    <Cell className="w-[118px]">Stopped</Cell>
                    <Cell className="w-[101px]">Real Time</Cell>
                    <Cell className="w-[71px]">192000 Hz</Cell>
                    <Cell className="w-[51px]">24 Bit</Cell>
                    <Cell className="w-[61px]">Stereo</Cell>
                    <Cell className="w-[101px]">FFT 1048576 pts</Cell>
                    <Cell className="w-[73px]">Blackman</Cell>
                    <Cell className="flex-1" />
                </div>
            </div>
            <Taskbar />

            <Readout title="THD" value="0.00167 %" size="text-[28px]" className="left-[985px] top-[9px] h-[104px] w-[153px]" />
            <Readout title="Peak Amplitude" value="-0.79 dBV rms" size="text-2xl" className="left-[1407px] top-2 h-[103px] w-[163px]" />
        </div>
    );
}

export default App;
